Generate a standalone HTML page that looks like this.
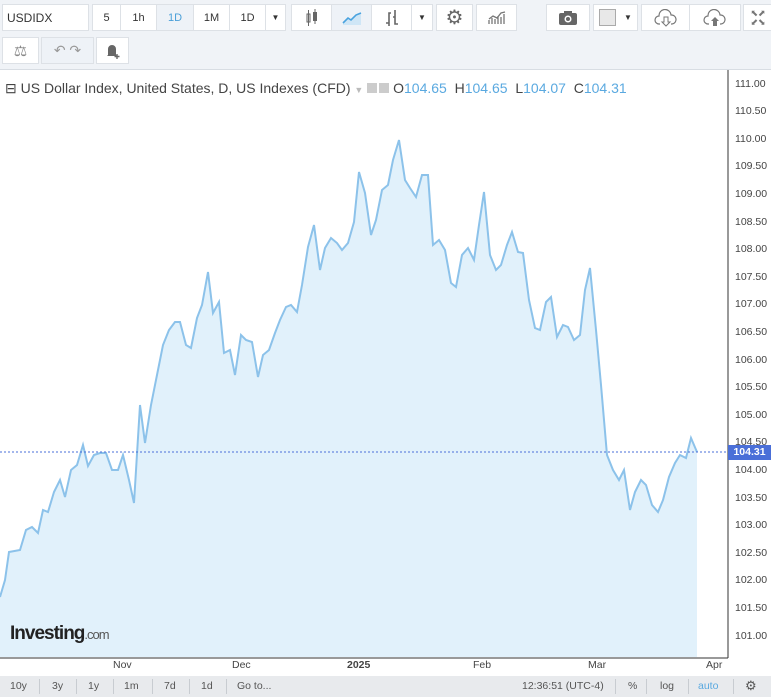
<!DOCTYPE html><html><head><style>
body{margin:0;width:771px;height:697px;overflow:hidden;background:#fff;font-family:"Liberation Sans",sans-serif;position:relative}
.tb{position:absolute;left:0;top:0;width:771px;height:69px;background:#f0f3f7;border-bottom:1px solid #d8dde3}
.b{position:absolute;top:4px;height:27px;background:#fff;border:1px solid #dde1e6;box-sizing:border-box;font-size:11px;color:#333;display:flex;align-items:center;justify-content:center}
.r2{top:37px}
.ax{position:absolute;left:735px;font-size:10.5px;color:#444}
.xl{position:absolute;top:659px;font-size:10.5px;color:#444}
.bot{position:absolute;left:0;top:676px;width:771px;height:21px;background:#e8eaed;font-size:10.5px;color:#555}
.bot span{position:absolute;top:4px}
.sep{position:absolute;top:3px;width:1px;height:15px;background:#c8ccd1}
</style></head><body>
<div class="tb"></div>
<div class="b" style="left:2px;width:87px;justify-content:flex-start;padding-left:4px;font-size:12px">USDIDX</div>
<div class="b" style="left:92px;width:29px">5</div>
<div class="b" style="left:120px;width:37px">1h</div>
<div class="b" style="left:156px;width:38px;background:#eef2f7;color:#4a9fd8">1D</div>
<div class="b" style="left:193px;width:37px">1M</div>
<div class="b" style="left:229px;width:37px">1D</div>
<div class="b" style="left:265px;width:21px;font-size:8px">▼</div>
<div class="b" style="left:291px;width:41px"><svg width="14" height="18"><rect x="2" y="5" width="3" height="8" fill="none" stroke="#666"/><line x1="3.5" y1="1" x2="3.5" y2="17" stroke="#666"/><rect x="8" y="3" width="4" height="9" fill="#666"/><line x1="10" y1="0" x2="10" y2="15" stroke="#666"/></svg></div>
<div class="b" style="left:331px;width:41px;background:#eef2f7"><svg width="20" height="14"><path d="M1 12 L6 7 L9 9 L14 4 L19 2 L19 14 L1 14Z" fill="#cfe6f6"/><path d="M1 12 L6 7 L9 9 L14 4 L19 2" fill="none" stroke="#4aa3df" stroke-width="1.6"/></svg></div>
<div class="b" style="left:371px;width:41px"><svg width="16" height="18"><path d="M2 14h3V4h2M5 14v3M11 1v14h3M9 8h2" fill="none" stroke="#666" stroke-width="1.6"/></svg></div>
<div class="b" style="left:411px;width:22px;font-size:8px">▼</div>
<div class="b" style="left:436px;width:37px;font-size:20px;color:#666">⚙</div>
<div class="b" style="left:476px;width:41px"><svg width="18" height="14"><path d="M1 13V9M4 13V7M7 13V8M10 13V5M13 13V6M16 13V3M1 8L5 5L9 7L13 2L17 1" stroke="#777" fill="none" stroke-width="1.3"/></svg></div>
<div class="b" style="left:546px;width:44px"><svg width="20" height="16"><rect x="1" y="3" width="18" height="12" rx="2" fill="#666"/><rect x="6" y="1" width="8" height="3" fill="#666"/><circle cx="10" cy="9" r="3.5" fill="#fff"/><circle cx="10" cy="9" r="2" fill="#666"/></svg></div>
<div class="b" style="left:593px;width:45px;justify-content:flex-start;padding-left:5px"><span style="display:inline-block;width:15px;height:15px;background:#e8e8e8;border:1px solid #aaa"></span><span style="font-size:8px;margin-left:8px">▼</span></div>
<div class="b" style="left:641px;width:49px"><svg width="24" height="18"><path d="M6 15H5a4 4 0 0 1 0-8 6 6 0 0 1 12-1 4.5 4.5 0 0 1 1 9h-1" fill="none" stroke="#777" stroke-width="1.2"/><path d="M10 8v5H8l4 4 4-4h-2V8z" fill="none" stroke="#777"/></svg></div>
<div class="b" style="left:689px;width:52px"><svg width="24" height="18"><path d="M6 15H5a4 4 0 0 1 0-8 6 6 0 0 1 12-1 4.5 4.5 0 0 1 1 9h-1" fill="none" stroke="#777" stroke-width="1.2"/><path d="M10 17v-5H8l4-4 4 4h-2v5z" fill="#777"/></svg></div>
<div class="b" style="left:743px;width:30px;font-size:9px;color:#777;line-height:9px;text-align:center">⬉⬈<br>⬋⬊</div>
<div class="b r2" style="left:2px;width:37px;font-size:15px;color:#888">⚖</div>
<div class="b r2" style="left:41px;width:53px;background:#eef2f7;color:#999;font-size:14px">↶ ↷</div>
<div class="b r2" style="left:96px;width:33px"><svg width="18" height="18"><path d="M4 13V7a4 4 0 0 1 8 0v6l1 1H3z" fill="#666"/><path d="M13 12v5M10.5 14.5h5" stroke="#666" stroke-width="1.4"/></svg></div>
<svg style="position:absolute;left:0;top:70px" width="771" height="606">
<line x1="728" y1="0" x2="728" y2="588" stroke="#333"/>
<line x1="0" y1="588" x2="728" y2="588" stroke="#333"/>
<g id="ch" transform="translate(0,-70)">
<path d="M0,597 L5,580 L9,552 L20,550 L26,530 L32,527 L38,533 L43,510 L48,512 L54,492 L60,480 L65,497 L71,470 L77,465 L83,445 L88,466 L94,455 L100,453 L106,453 L112,470 L118,470 L123,455 L129,480 L134,503 L140,405 L145,443 L151,405 L157,375 L163,345 L169,330 L175,322 L180,322 L186,345 L191,348 L197,318 L202,305 L208,272 L213,313 L219,302 L224,353 L230,350 L235,375 L241,335 L246,340 L252,342 L258,377 L263,355 L269,350 L275,333 L280,320 L286,307 L291,305 L297,312 L302,285 L308,247 L314,225 L320,270 L325,248 L331,238 L337,243 L342,250 L348,243 L354,222 L359,172 L365,193 L371,235 L376,220 L382,190 L388,185 L393,160 L399,140 L405,180 L410,188 L416,197 L422,175 L428,175 L433,245 L439,240 L445,250 L451,283 L456,287 L462,255 L468,248 L474,260 L479,225 L484,192 L490,255 L496,270 L501,265 L507,245 L512,232 L518,252 L523,253 L529,300 L535,328 L540,330 L546,302 L551,297 L557,337 L563,325 L568,327 L574,340 L580,335 L585,290 L590,268 L596,330 L601,385 L607,455 L613,470 L619,480 L624,470 L630,510 L635,492 L641,480 L646,485 L652,505 L658,512 L663,500 L669,477 L675,463 L680,455 L686,458 L691,438 L697,452 L697,657 L0,657Z" fill="#e1f1fb"/>
<path d="M0,597 L5,580 L9,552 L20,550 L26,530 L32,527 L38,533 L43,510 L48,512 L54,492 L60,480 L65,497 L71,470 L77,465 L83,445 L88,466 L94,455 L100,453 L106,453 L112,470 L118,470 L123,455 L129,480 L134,503 L140,405 L145,443 L151,405 L157,375 L163,345 L169,330 L175,322 L180,322 L186,345 L191,348 L197,318 L202,305 L208,272 L213,313 L219,302 L224,353 L230,350 L235,375 L241,335 L246,340 L252,342 L258,377 L263,355 L269,350 L275,333 L280,320 L286,307 L291,305 L297,312 L302,285 L308,247 L314,225 L320,270 L325,248 L331,238 L337,243 L342,250 L348,243 L354,222 L359,172 L365,193 L371,235 L376,220 L382,190 L388,185 L393,160 L399,140 L405,180 L410,188 L416,197 L422,175 L428,175 L433,245 L439,240 L445,250 L451,283 L456,287 L462,255 L468,248 L474,260 L479,225 L484,192 L490,255 L496,270 L501,265 L507,245 L512,232 L518,252 L523,253 L529,300 L535,328 L540,330 L546,302 L551,297 L557,337 L563,325 L568,327 L574,340 L580,335 L585,290 L590,268 L596,330 L601,385 L607,455 L613,470 L619,480 L624,470 L630,510 L635,492 L641,480 L646,485 L652,505 L658,512 L663,500 L669,477 L675,463 L680,455 L686,458 L691,438 L697,452" fill="none" stroke="#8cc2ea" stroke-width="2"/>
<line x1="0" y1="452" x2="728" y2="452" stroke="#4a6fd8" stroke-dasharray="2,2"/>
</g>
</svg>
<div style="position:absolute;left:728px;top:445px;width:43px;height:15px;background:#4a6fd8;color:#fff;font-size:10.5px;font-weight:bold;line-height:15px;text-align:center">104.31</div>
<div style="position:absolute;left:5px;top:80px;font-size:14px;color:#444;white-space:nowrap">⊟ US Dollar Index, United States, D, US Indexes (CFD) <span style="color:#bbb;font-size:9px">▼</span> <span style="display:inline-block;width:10px;height:10px;background:#ccc"></span><span style="display:inline-block;width:10px;height:10px;background:#ccc;margin-left:2px"></span> O<span style="color:#5aa9e0">104.65</span>&nbsp; H<span style="color:#5aa9e0">104.65</span>&nbsp; L<span style="color:#5aa9e0">104.07</span>&nbsp; C<span style="color:#5aa9e0">104.31</span></div>
<div class="ax" style="top:78px">111.00</div><div class="ax" style="top:105px">110.50</div><div class="ax" style="top:133px">110.00</div><div class="ax" style="top:160px">109.50</div><div class="ax" style="top:188px">109.00</div><div class="ax" style="top:216px">108.50</div><div class="ax" style="top:243px">108.00</div><div class="ax" style="top:271px">107.50</div><div class="ax" style="top:298px">107.00</div><div class="ax" style="top:326px">106.50</div><div class="ax" style="top:354px">106.00</div><div class="ax" style="top:381px">105.50</div><div class="ax" style="top:409px">105.00</div><div class="ax" style="top:436px">104.50</div><div class="ax" style="top:464px">104.00</div><div class="ax" style="top:492px">103.50</div><div class="ax" style="top:519px">103.00</div><div class="ax" style="top:547px">102.50</div><div class="ax" style="top:574px">102.00</div><div class="ax" style="top:602px">101.50</div><div class="ax" style="top:630px">101.00</div>
<div style="position:absolute;left:10px;top:623px;font-size:19px;font-weight:bold;color:#222;letter-spacing:-1px">Investing<span style="font-size:13px;font-weight:normal;color:#555">.com</span></div>
<div class="xl" style="left:113px">Nov</div><div class="xl" style="left:232px">Dec</div><div class="xl" style="left:347px;font-weight:bold">2025</div><div class="xl" style="left:473px">Feb</div><div class="xl" style="left:588px">Mar</div><div class="xl" style="left:706px">Apr</div>
<div class="bot">
<span style="left:10px">10y</span><i class="sep" style="left:39px"></i><span style="left:52px">3y</span><i class="sep" style="left:76px"></i><span style="left:88px">1y</span><i class="sep" style="left:113px"></i><span style="left:124px">1m</span><i class="sep" style="left:152px"></i><span style="left:164px">7d</span><i class="sep" style="left:189px"></i><span style="left:201px">1d</span><i class="sep" style="left:226px"></i><span style="left:237px">Go to...</span>
<span style="left:522px">12:36:51 (UTC-4)</span><i class="sep" style="left:615px"></i><span style="left:628px">%</span><i class="sep" style="left:646px"></i><span style="left:660px">log</span><i class="sep" style="left:688px"></i><span style="left:698px;color:#5aa9e0">auto</span><i class="sep" style="left:733px"></i><span style="left:745px;top:2px;font-size:13px">⚙</span>
</div>
</body></html>
